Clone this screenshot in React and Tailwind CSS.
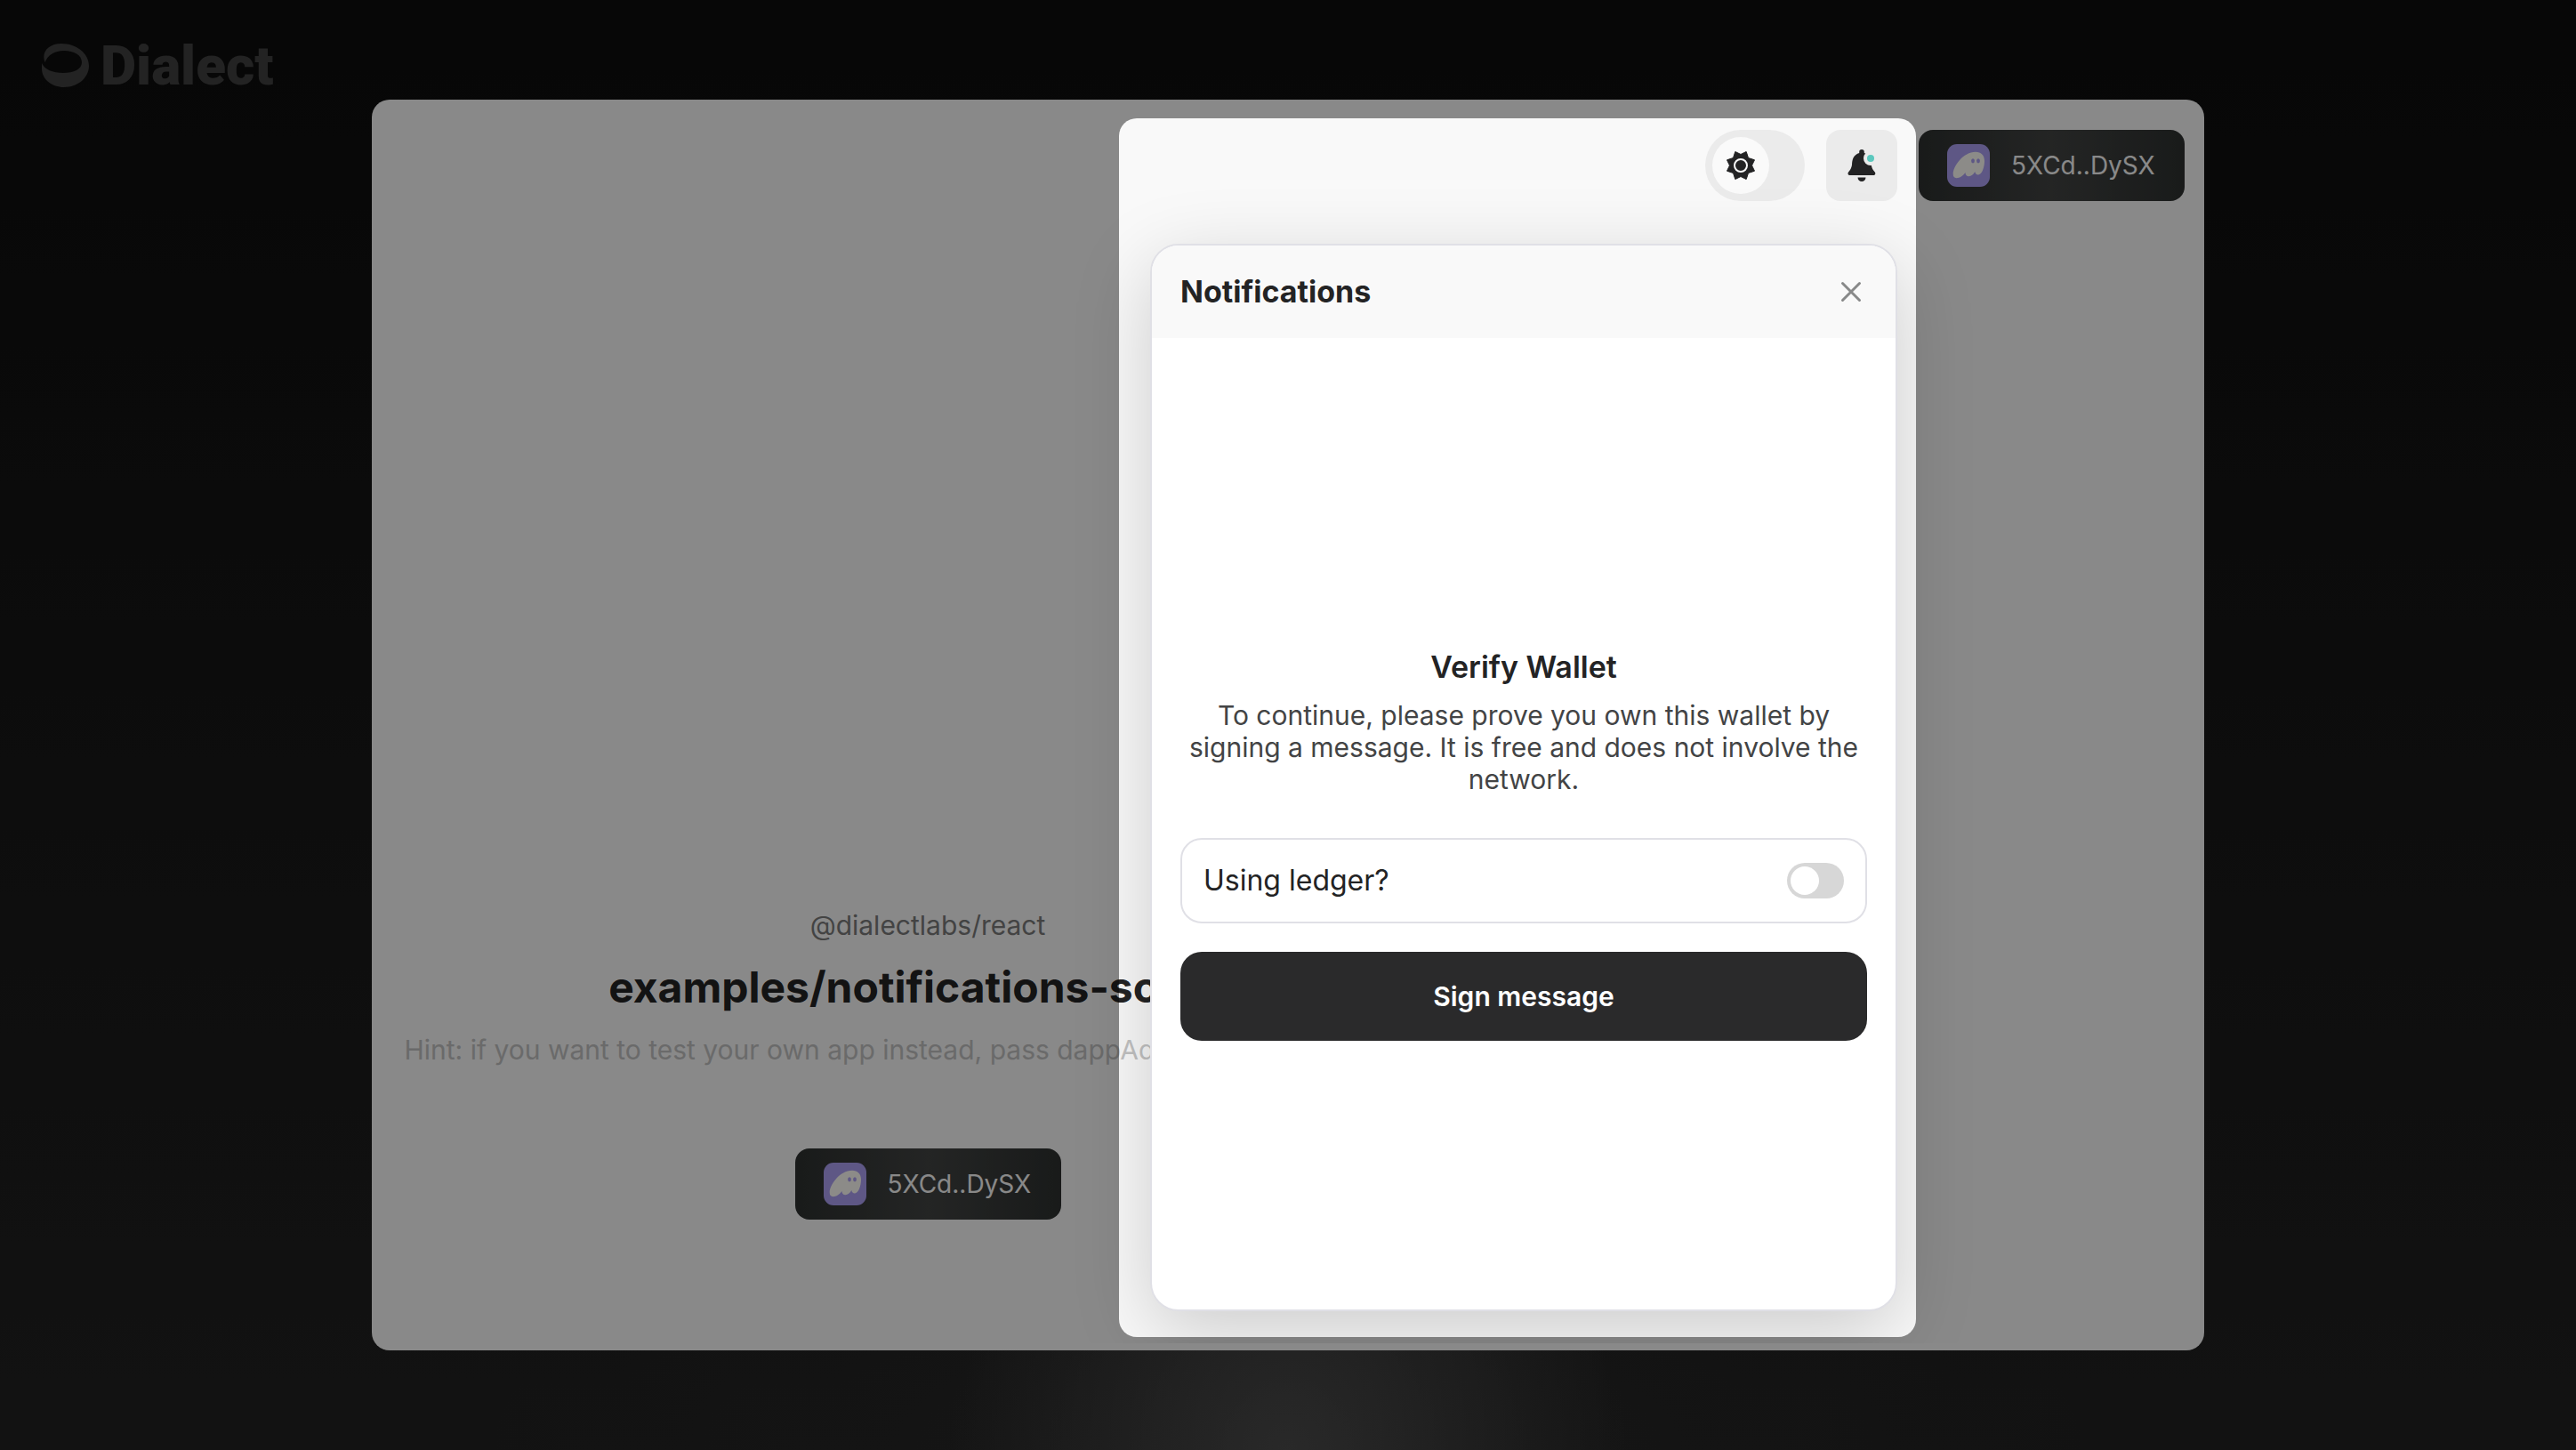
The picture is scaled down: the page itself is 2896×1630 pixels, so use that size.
import React from "react";

function DialectMark() {
  return (
    <svg width="54" height="50" viewBox="0 0 54 50" fill="#404040" aria-hidden="true">
      <path
        fillRule="evenodd"
        d="M3.500 21C-1 9 8 0 22 0c17 0 31 11 31 25 0 13-12 24-28 24C11 49 0 40 0 28v-6c3 7 12 11 24 11 12 0 21-4 21-12 0-8-9-13-20-13C14 8 7 13 3.500 21Z"
      />
    </svg>
  );
}

function PhantomIcon() {
  return (
    <svg width="48" height="48" viewBox="0 0 48 48" aria-hidden="true">
      <rect width="48" height="48" rx="11" fill="#ab9ff2" />
      <path
        d="M32 8.800c6 0 10 3.700 10 10.200 0 7-3 15.500-7 15.500-2.200 0-3.300-1.500-3.700-3.500-1.800 3.200-4.300 5.200-6.800 5.200-2.700 0-4-1.700-4-4.200-2.500 3.700-6.500 6.200-9.800 6.200-2.700 0-4-1.800-4-4.700C6.700 25 18 8.800 32 8.800Z"
        fill="#fffdf8"
      />
      <ellipse cx="29" cy="18.800" rx="1.900" ry="2.600" fill="#ab9ff2" />
      <ellipse cx="35" cy="18.800" rx="1.900" ry="2.600" fill="#ab9ff2" />
    </svg>
  );
}

function SunIcon() {
  return (
    <svg width="32" height="32" viewBox="0 0 32 32" aria-hidden="true">
      <path
        d="M9.800 .5 16 3.500 22.200 .5 24.500 7.500 31.500 9.800 28.500 16 31.500 22.200 24.500 24.500 22.200 31.500 16 28.500 9.800 31.500 7.500 24.500 .5 22.200 3.500 16 .5 9.800 7.500 7.500Z"
        fill="#232324"
        stroke="#232324"
        strokeLinejoin="round"
      />
      <circle cx="16" cy="16" r="7" fill="#232324" stroke="#fafafa" strokeWidth="2" />
    </svg>
  );
}

function BellIcon() {
  return (
    <svg width="32" height="36" viewBox="0 0 32 36" aria-hidden="true">
      <path
        d="M13.200 2.800a2.800 2.800 0 0 1 5.600 0V4c2.500.8 5 2.500 6.500 5.500 1 2 1.500 5 1.500 8 .3 3 2 6 4 8 1 1.200.5 3.500-1 3.500H2c-1.500 0-2-2.300-1-3.500 2-2 3.500-5 4-8 0-3 .5-6 1.500-8C8 6.500 10.500 4.800 13.200 4Z"
        fill="#232324"
      />
      <path d="M11.500 31.500h9c0 2.500-2 4.500-4.500 4.500s-4.500-2-4.500-4.500Z" fill="#232324" />
      <circle cx="26" cy="10" r="8" fill="#ebebeb" />
      <circle cx="26" cy="10" r="4" fill="#5cc8be" />
    </svg>
  );
}

function WalletButton() {
  return (
    <button
      type="button"
      className="flex h-20 w-[299px] items-center gap-6 rounded-2xl bg-linear-to-r from-[#2e3130] via-[#424443] to-[#2e3130] pl-8 text-[28px] leading-10 text-[#fafafa]"
    >
      <PhantomIcon />
      <span>5XCd..DySX</span>
    </button>
  );
}

function NotificationsPopover() {
  return (
    <section
      aria-labelledby="notifications-title"
      className="absolute top-[162px] right-[345px] flex h-[1200px] w-[840px] flex-col overflow-hidden rounded-[32px] border-2 border-[#e0e0e6] bg-white shadow-[0_24px_88px_rgba(0,0,0,0.18)]"
    >
      <header className="flex h-26 items-center justify-between bg-[#f9f9f9] pr-9 pl-8">
        <h2 id="notifications-title" className="text-[34px] leading-10 font-bold text-[#232324]">
          Notifications
        </h2>
        <button type="button" aria-label="Close">
          <svg width="28" height="28" viewBox="0 0 28 28" stroke="#888989" strokeWidth="3" strokeLinecap="round" aria-hidden="true">
            <path d="M4.500 4.500 23.500 23.500M23.500 4.500 4.500 23.500" />
          </svg>
        </button>
      </header>
      <div className="flex grow flex-col justify-center px-8 pt-12">
        <h3 className="text-center text-[34px] leading-10 font-semibold text-[#232324]">Verify Wallet</h3>
        <p className="mt-4 text-center text-[30px] leading-9 text-[#434445]">
          To continue, please prove you own this wallet by signing a message. It is free and does not involve the
          network.
        </p>
        <label className="mt-12 flex h-24 items-center justify-between rounded-3xl border-2 border-[#e0e0e6] px-6 text-[32px] leading-10 text-[#232324]">
          Using ledger?
          <input
            type="checkbox"
            role="switch"
            className="flex h-10 w-16 appearance-none items-center rounded-full bg-[#d7d7d7] p-1 before:size-8 before:rounded-full before:bg-white checked:justify-end"
          />
        </label>
        <button
          type="button"
          className="mt-8 h-25 rounded-3xl bg-[#2a2a2b] text-[30px] leading-9 font-semibold text-white"
        >
          Sign message
        </button>
      </div>
    </section>
  );
}

export default function App() {
  return (
    <div className="flex min-h-screen flex-col overflow-hidden bg-[#0d0d0d] bg-[radial-gradient(ellipse_380px_420px_at_50%_100%,#5a5a5ab0,transparent),radial-gradient(ellipse_900px_300px_at_50%_100%,#40404040,transparent),linear-gradient(to_bottom,#0d0d0d,#222222)] font-['Inter',sans-serif]">
      <header className="flex h-28 shrink-0 items-center px-[47px] pt-9">
        <a href="#" className="flex items-center gap-3 font-['Roboto',sans-serif] text-[62px] leading-none font-black text-[#404040]">
          <DialectMark />
          Dialect
        </a>
      </header>
      <main className="relative mx-auto w-full max-w-[2060px] rounded-[20px] bg-[#f9f9f9] pb-2">
        <div className="relative flex min-h-[1398px] flex-col overflow-hidden">
          <div className="flex items-center justify-end gap-6 pt-[34px] pr-[22px]">
            <button type="button" role="switch" aria-checked="false" aria-label="Dark theme" className="flex h-20 w-28 items-center rounded-full bg-[#ebebeb] p-2">
              <span className="flex size-16 items-center justify-center rounded-full bg-[#fafafa]">
                <SunIcon />
              </span>
            </button>
            <button type="button" aria-label="Notifications" className="flex size-20 items-center justify-center rounded-2xl bg-[#ebebeb]">
              <BellIcon />
            </button>
            <WalletButton />
          </div>
          <div className="flex w-full max-w-[1250px] grow flex-col items-center justify-end pb-[139px] whitespace-nowrap">
            <p className="text-[30px] leading-9 text-[#7a7b7b]">@dialectlabs/react</p>
            <h1 className="mt-6 text-5xl leading-[56px] font-bold text-[#232324]">examples/notifications-solana</h1>
            <p className="mt-6 text-[30px] leading-9 text-[#c2c2c2]">
              Hint: if you want to test your own app instead, pass dappAddress in the url params.
            </p>
            <div className="mt-[93px]">
              <WalletButton />
            </div>
          </div>
          <NotificationsPopover />
        </div>
        <div
          aria-hidden="true"
          className="pointer-events-none absolute top-[21px] right-[324px] bottom-[15px] w-[896px] rounded-[20px] shadow-[0_0_0_3000px_rgba(0,0,0,0.45)]"
        />
      </main>
    </div>
  );
}
